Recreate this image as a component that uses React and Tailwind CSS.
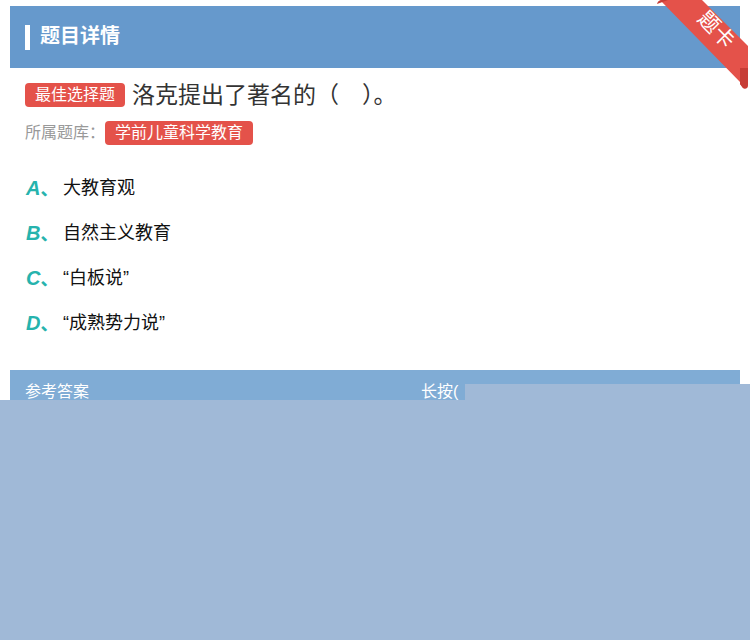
import React from "react";

const cjk = { fontFamily: '"Liberation Sans", "Noto Sans CJK SC", sans-serif' };

const options = [
  ["A", "大教育观"],
  ["B", "自然主义教育"],
  ["C", "“白板说”"],
  ["D", "“成熟势力说”"],
];

export default function App() {
  return (
    <div className="relative w-[750px] h-[640px] overflow-hidden bg-white" style={cjk}>
      <div className="mx-[10px] pt-[6px]">
        <div className="h-[62px] bg-[#6699cc] flex items-center pl-[15px]">
          <div className="w-[5px] h-[25px] bg-white" />
          <div className="ml-[10px] -mt-[3px] text-[20px] font-bold text-white leading-none">题目详情</div>
        </div>
        <div className="px-[15px]">
          <div className="mt-[15px] h-[24px] flex items-center">
            <span className="h-[24px] px-[10px] rounded-[4px] bg-[#e4524a] text-white text-[16px] leading-[24px]">最佳选择题</span>
            <span className="ml-[7px] text-[23px] text-[#333] leading-none">洛克提出了著名的（{"\u2003"}）。</span>
          </div>
          <div className="mt-[14px] h-[24px] flex items-center">
            <span className="text-[16px] text-[#999] leading-none">所属题库：</span>
            <span className="h-[24px] px-[10px] rounded-[4px] bg-[#e4524a] text-white text-[16px] leading-[24px]">学前儿童科学教育</span>
          </div>
          <div className="mt-[20px] flex flex-col">
            {options.map(([k, v]) => (
              <div key={k} className="h-[45px] flex items-center">
                <span className="w-[38px] pl-[1px] text-[20px] font-bold italic text-[#26b3ad] leading-none">
                  {k}<span className="not-italic text-[18px]">、</span>
                </span>
                <span className="text-[18px] text-[#111] leading-none">{v}</span>
              </div>
            ))}
          </div>
        </div>
        <div className="mt-[25px] h-[44px] bg-[#80acd5] flex items-center px-[15px]">
          <span className="text-[16px] text-white leading-none">参考答案</span>
          <span className="ml-[332px] text-[16px] text-white leading-none">长按(</span>
        </div>
      </div>

      {/* ribbon */}
      <svg className="absolute left-[650px] top-0" width="100" height="95" viewBox="650 0 100 95">
        <path d="M660 0 L702 0 L748 46 L748 84 Q748 90 743 88 L740 84 L740 82 Z" fill="#e4524a" />
        <path d="M740 68 L748 68 L748 84 Q748 90 743 88 L740 84 Z" fill="#c73d36" />
        <path d="M657 4 Q658 0 662 0 L668 0 Z" fill="#c73d36" />
      </svg>
      <div className="absolute left-[692px] top-[17px] w-[50px] h-[24px] flex items-center justify-center text-white text-[21px] leading-none rotate-45">
        题卡
      </div>

      {/* overlay */}
      <div className="absolute left-[465px] right-0 top-[384px] h-[16px] bg-[#a0b9d7]" />
      <div className="absolute left-0 right-0 top-[400px] bottom-0 bg-[#a0b9d7]" />
    </div>
  );
}
